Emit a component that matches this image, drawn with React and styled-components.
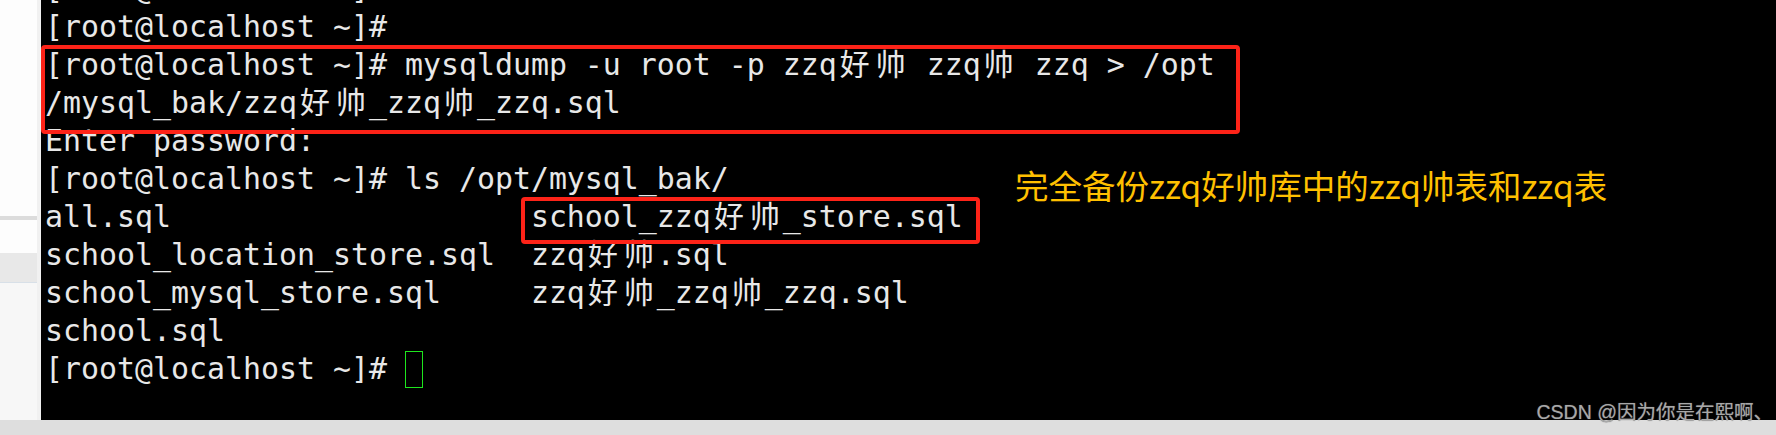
import React from 'react'
import styled, { createGlobalStyle } from 'styled-components'

const GlobalStyle = createGlobalStyle`
  html, body {
    margin: 0;
    padding: 0;
    background: #dedede;
  }
  body {
    width: 1776px;
    height: 435px;
    overflow: hidden;
  }
`

const Page = styled.div`
  position: relative;
  display: flex;
  flex-direction: column;
  width: 1776px;
  height: 435px;
  background: #dedede;
`
const Main = styled.div`
  display: flex;
  height: 420px;
`
const Sidebar = styled.div`
  display: flex;
  flex-direction: column;
  width: 37px;
  border-right: 4px solid #f1f1f1;
  background: #f7f7f7;
`
const SideBlock = styled.div`
  height: ${(p) => p.$h}px;
  background: ${(p) => p.$bg};
  border-bottom: ${(p) => (p.$line ? `1px solid ${p.$line}` : 'none')};
  flex-shrink: 0;
`
const Terminal = styled.div`
  position: relative;
  flex: 1;
  background: #000;
  overflow: hidden;
  padding-left: 4px;
`
const Scroll = styled.div`
  margin-top: -30px;
`
const Line = styled.div`
  height: 38px;
  line-height: 38px;
  white-space: pre;
  font-family: 'DejaVu Sans Mono', 'Noto Sans CJK SC', monospace;
  font-size: 29.9px;
  color: #e8e8e8;
`
const Wide = styled.span`
  display: inline-block;
  width: 2ch;
  line-height: 30px;
  text-align: center;
  font-family: 'DejaVu Sans Mono', 'Noto Sans CJK SC', monospace;
`
const Cursor = styled.span`
  display: inline-block;
  width: 16px;
  height: 35px;
  margin-top: 1px;
  vertical-align: top;
  border: 1px solid #1ee61e;
`
const RedBox = styled.div`
  position: absolute;
  left: ${(p) => p.$x}px;
  top: ${(p) => p.$y}px;
  width: ${(p) => p.$w}px;
  height: ${(p) => p.$h}px;
  box-sizing: border-box;
  border: 4px solid #fd2318;
  border-radius: 4px;
`
const Note = styled.div`
  position: absolute;
  left: 974px;
  top: 168px;
  font-family: 'Noto Sans CJK SC', sans-serif;
  font-size: 33.5px;
  line-height: 34px;
  color: #ffc000;
  white-space: nowrap;
`
const Watermark = styled.div`
  position: absolute;
  right: 3px;
  top: 401px;
  font-family: 'Liberation Sans', 'Noto Sans CJK SC', sans-serif;
  font-size: 19.5px;
  line-height: 22px;
  color: #a8a8a8;
  text-shadow: 0 0 1px #606060;
  white-space: nowrap;
`
const BottomBar = styled.div`
  height: 15px;
  background: #dedede;
`

// wrap CJK characters so each one takes two terminal cells
const Term = ({ text }) => {
  const parts = []
  let buf = ''
  for (const ch of text) {
    if (/[\u4e00-\u9fff]/.test(ch)) {
      if (buf) parts.push(buf)
      buf = ''
      parts.push(<Wide key={parts.length}>{ch}</Wide>)
    } else {
      buf += ch
    }
  }
  if (buf) parts.push(buf)
  return <Line>{parts}</Line>
}

const prompt = '[root@localhost ~]#'

const lines = [
  prompt,
  prompt,
  `${prompt} mysqldump -u root -p zzq好帅 zzq帅 zzq > /opt`,
  '/mysql_bak/zzq好帅_zzq帅_zzq.sql',
  'Enter password:',
  `${prompt} ls /opt/mysql_bak/`,
  'all.sql                    school_zzq好帅_store.sql',
  'school_location_store.sql  zzq好帅.sql',
  'school_mysql_store.sql     zzq好帅_zzq帅_zzq.sql',
  'school.sql',
]

export default function App() {
  return (
    <Page>
      <GlobalStyle />
      <Main>
        <Sidebar>
          <SideBlock $h={216} $bg="#fdfdfd" />
          <SideBlock $h={4} $bg="#dcdcdc" />
          <SideBlock $h={33} $bg="#fdfdfd" />
          <SideBlock $h={29} $bg="#e8e8e8" $line="#d8e0e8" />
        </Sidebar>
        <Terminal>
          <Scroll>
            {lines.map((l, i) => (
              <Term key={i} text={l} />
            ))}
            <Line>
              {prompt} <Cursor />
            </Line>
          </Scroll>
          <RedBox $x={0} $y={45} $w={1199} $h={89} />
          <RedBox $x={480} $y={197} $w={459} $h={47} />
          <Note>完全备份zzq好帅库中的zzq帅表和zzq表</Note>
        </Terminal>
      </Main>
      <BottomBar />
      <Watermark>CSDN @因为你是在熙啊、</Watermark>
    </Page>
  )
}
